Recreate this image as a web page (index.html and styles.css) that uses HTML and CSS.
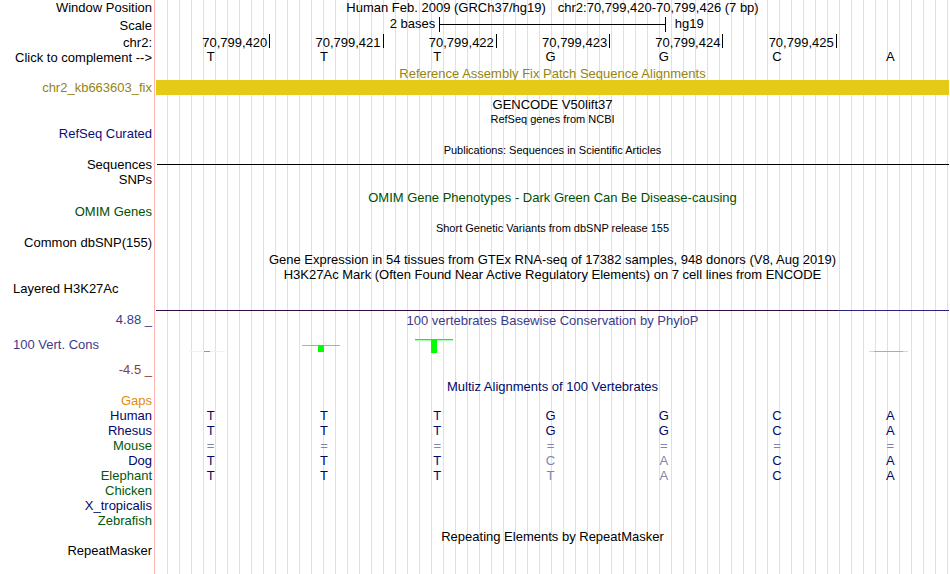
FILE: index.html
```html
<!DOCTYPE html>
<html lang="en">
<head>
    <title>Human chr2:70,799,420-70,799,426 hg19</title>
    <meta charset="UTF-8">
    <link rel="stylesheet" href="styles.css">
</head>
<body>
    <main class="browser">
        <!-- ruler -->
        <div class="row window-row">
            <div class="label">Window Position</div>
            <div class="track position"><span>Human Feb. 2009 (GRCh37/hg19)</span><span>chr2:70,799,420-70,799,426 (7 bp)</span></div>
        </div>
        <div class="row scale-row">
            <div class="label">Scale</div>
            <div class="track scale">
                <span class="scale-text">2 bases</span>
                <span class="scale-bar"></span>
                <span class="scale-db">hg19</span>
            </div>
        </div>
        <div class="row coord-row">
            <div class="label">chr2:</div>
            <div class="track coords">
                <span>70,799,420</span>
                <span>70,799,421</span>
                <span>70,799,422</span>
                <span>70,799,423</span>
                <span>70,799,424</span>
                <span>70,799,425</span>
                <span></span>
            </div>
        </div>
        <div class="row">
            <div class="label">Click to complement --&gt;</div>
            <div class="track bases">
                <span>T</span><span>T</span><span>T</span><span>G</span><span>G</span><span>C</span><span>A</span>
            </div>
        </div>

        <!-- fix patch -->
        <div class="title patch-title olive">Reference Assembly Fix Patch Sequence Alignments</div>
        <div class="row">
            <div class="label olive">chr2_kb663603_fix</div>
            <div class="track patch"></div>
        </div>

        <!-- genes and variants -->
        <div class="title">GENCODE V50lift37</div>
        <div class="title small subtitle">RefSeq genes from NCBI</div>
        <div class="row">
            <div class="label blue">RefSeq Curated</div>
        </div>
        <div class="title small">Publications: Sequences in Scientific Articles</div>
        <div class="row">
            <div class="label">Sequences</div>
            <div class="track sequences"><hr></div>
        </div>
        <div class="row snp-row">
            <div class="label">SNPs</div>
        </div>
        <div class="title dark-green">OMIM Gene Phenotypes - Dark Green Can Be Disease-causing</div>
        <div class="row">
            <div class="label dark-green">OMIM Genes</div>
        </div>
        <div class="title small">Short Genetic Variants from dbSNP release 155</div>
        <div class="row">
            <div class="label">Common dbSNP(155)</div>
        </div>

        <!-- expression and regulation -->
        <div class="title">Gene Expression in 54 tissues from GTEx RNA-seq of 17382 samples, 948 donors (V8, Aug 2019)</div>
        <div class="title subtitle">H3K27Ac Mark (Often Found Near Active Regulatory Elements) on 7 cell lines from ENCODE</div>
        <div class="row layered-row">
            <div class="label left">Layered H3K27Ac</div>
            <div class="track layered"></div>
        </div>

        <!-- conservation -->
        <div class="row cons-row">
            <div class="cons-labels">
                <div class="label violet">4.88 _</div>
                <div class="label left violet">100 Vert. Cons</div>
                <div class="label maroon">-4.5 _</div>
            </div>
            <div class="track">
                <div class="track-title violet">100 vertebrates Basewise Conservation by PhyloP</div>
                <svg class="wiggle" viewBox="0 0 793 50" preserveAspectRatio="none" shape-rendering="crispEdges">
                    <rect x="33" y="24" width="36" height="1" fill="#dcffe4"/>
                    <rect x="48" y="24" width="6" height="1" fill="#00ff00"/>
                    <rect x="146" y="18" width="38" height="1" fill="#33ff44"/>
                    <rect x="162" y="18" width="6" height="7" fill="#00ff00"/>
                    <rect x="259" y="12" width="38" height="1" fill="#00ff00"/>
                    <rect x="259" y="13" width="38" height="1" fill="#a8ffb0"/>
                    <rect x="275" y="12" width="6" height="14" fill="#00ff00"/>
                    <rect x="713" y="24" width="39" height="1" fill="#ffc8c8"/>
                    <rect x="718" y="24" width="29" height="1" fill="#ff8888"/>
                </svg>
            </div>
        </div>

        <!-- multiz alignment -->
        <div class="title navy">Multiz Alignments of 100 Vertebrates</div>
        <table class="multiz">
            <tr><th scope="row" class="orange">Gaps</th><td></td><td></td><td></td><td></td><td></td><td></td><td></td></tr>
            <tr><th scope="row">Human</th><td>T</td><td>T</td><td>T</td><td>G</td><td>G</td><td>C</td><td>A</td></tr>
            <tr><th scope="row">Rhesus</th><td>T</td><td>T</td><td>T</td><td>G</td><td>G</td><td>C</td><td>A</td></tr>
            <tr class="missing"><th scope="row" class="green">Mouse</th><td>=</td><td>=</td><td>=</td><td>=</td><td>=</td><td>=</td><td>=</td></tr>
            <tr><th scope="row">Dog</th><td>T</td><td>T</td><td>T</td><td class="diff">C</td><td class="diff">A</td><td>C</td><td>A</td></tr>
            <tr><th scope="row" class="green">Elephant</th><td>T</td><td>T</td><td>T</td><td class="diff">T</td><td class="diff">A</td><td>C</td><td>A</td></tr>
            <tr><th scope="row" class="green">Chicken</th><td></td><td></td><td></td><td></td><td></td><td></td><td></td></tr>
            <tr><th scope="row">X_tropicalis</th><td></td><td></td><td></td><td></td><td></td><td></td><td></td></tr>
            <tr><th scope="row" class="green">Zebrafish</th><td></td><td></td><td></td><td></td><td></td><td></td><td></td></tr>
        </table>

        <!-- repeats -->
        <div class="title subtitle">Repeating Elements by RepeatMasker</div>
        <div class="row">
            <div class="label">RepeatMasker</div>
        </div>
    </main>
</body>
</html>
```
FILE: styles.css
```css
body {
    margin: 0;
    background: #fff;
    color: #000;
    font-family: "Liberation Sans", Arial, Helvetica, sans-serif;
    font-size: 13px;
    line-height: 15px;
}
.browser {
    box-sizing: border-box;
    min-height: 100vh;
    padding-right: 1px;
    /* red separator after the labels, then a guide line every 12px */
    background:
        linear-gradient(#ffb4b4, #ffb4b4) 154px 0 / 1px 100% no-repeat,
        repeating-linear-gradient(to right, transparent 0 11px, #dcdcff 11px 12px) 156px 0 no-repeat;
}
.row {
    display: grid;
    grid-template-columns: 156px 1fr;
    min-height: 15px;
}
.label {
    padding-right: 4px;
    text-align: right;
    white-space: nowrap;
}
.label.left {
    padding-left: 13px;
    text-align: left;
}
.title {
    height: 14px;
    margin-left: 156px;
    padding-top: 2px;
    text-align: center;
    white-space: nowrap;
}
.title.subtitle {
    padding-top: 1px;
}
.small {
    font-size: 11px;
}

/* ruler */
.window-row {
    min-height: 16px;
}
.position {
    display: flex;
    justify-content: center;
    gap: 12px;
}
.scale-row {
    min-height: 18px;
}
.scale-row .label {
    padding-top: 2px;
}
.scale {
    display: grid;
    grid-template-columns: 5fr 4fr 5fr;
}
.scale-text {
    padding-right: 4px;
    text-align: right;
    line-height: 16px;
}
.scale-bar {
    height: 15px;
    margin-top: 1px;
    border: solid #000;
    border-width: 0 1px;
    background: linear-gradient(#000, #000) 0 7px / 100% 1px no-repeat;
}
.scale-db {
    padding-left: 9px;
    line-height: 16px;
}
.coord-row {
    height: 16px;
    line-height: 18px;
}
.coords, .bases {
    display: grid;
    grid-template-columns: repeat(7, 1fr);
}
.coords span {
    height: 14px;
    padding-right: 2px;
    text-align: right;
}
.coords span + span {
    border-left: 1px solid #000;
}
.bases span {
    padding-right: 4px;
    text-align: center;
    line-height: 13px;
}

/* tracks */
.patch-title {
    height: 14px;
    padding-top: 1px;
}
.patch {
    background: #e6ca18;
}
.sequences hr {
    height: 1px;
    margin: 7px 0 0 1px;
    border: 0;
    background: #000;
}
.snp-row {
    min-height: 16px;
    line-height: 16px;
}
.layered-row {
    min-height: 30px;
}
.layered {
    background: linear-gradient(to right, #330c44 86%, #2c2480 86%) 0 100% / 100% 1px no-repeat;
}
.cons-row {
    min-height: 66px;
}
.cons-labels {
    display: flex;
    flex-direction: column;
    justify-content: space-between;
    padding-top: 1px;
}
.track-title {
    height: 14px;
    padding-top: 2px;
    text-align: center;
}
.wiggle {
    display: block;
    width: 100%;
    height: 50px;
}
.multiz {
    width: 100%;
    border-collapse: collapse;
    table-layout: fixed;
    color: #000a66;
}
.multiz th {
    width: 152px;
    padding: 0 4px 0 0;
    font-weight: normal;
    text-align: right;
}
.multiz td {
    height: 15px;
    padding: 0 4px 0 0;
    text-align: center;
}
.multiz .missing td, .multiz .diff {
    color: #8084b2;
}

/* track colours */
.olive {
    color: #95850d;
}
.blue {
    color: #0c0c78;
}
.navy {
    color: #000a66;
}
.dark-green {
    color: #005000;
}
.green {
    color: #005a0a;
}
.violet {
    color: #3c3c8c;
}
.maroon {
    color: #8c3c3c;
}
.orange {
    color: #e68a0a;
}
```
